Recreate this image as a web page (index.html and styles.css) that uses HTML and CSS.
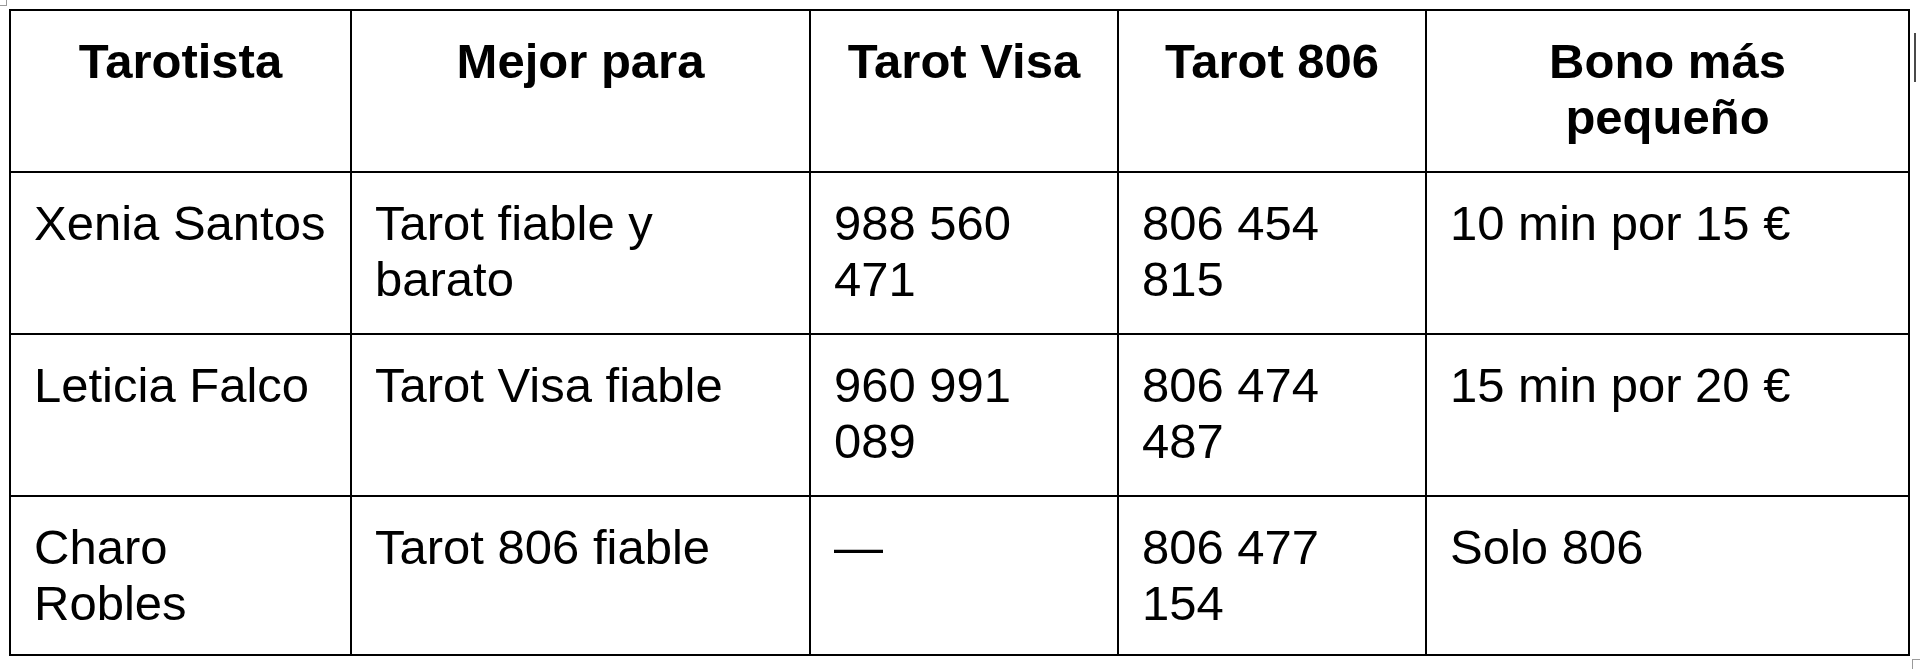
FILE: index.html
```html
<!DOCTYPE html>
<html lang="es">
<head>
<meta charset="utf-8">
<title>Tarotistas</title>
<link rel="stylesheet" href="styles.css">
</head>
<body>
<div class="page">
  <span class="handle handle-move"></span>
  <span class="handle handle-bar"></span>
  <span class="handle handle-resize"></span>
  <table class="tarot-table">
    <colgroup>
      <col class="c1"><col class="c2"><col class="c3"><col class="c4"><col class="c5">
    </colgroup>
    <thead>
      <tr class="row-head">
        <th>Tarotista</th>
        <th>Mejor para</th>
        <th>Tarot Visa</th>
        <th>Tarot 806</th>
        <th>Bono más pequeño</th>
      </tr>
    </thead>
    <tbody>
      <tr class="row">
        <td>Xenia Santos</td>
        <td>Tarot fiable y barato</td>
        <td>988 560 471</td>
        <td>806 454 815</td>
        <td>10 min por 15 €</td>
      </tr>
      <tr class="row">
        <td>Leticia Falco</td>
        <td>Tarot Visa fiable</td>
        <td>960 991 089</td>
        <td>806 474 487</td>
        <td>15 min por 20 €</td>
      </tr>
      <tr class="row row-last">
        <td>Charo Robles</td>
        <td>Tarot 806 fiable</td>
        <td>—</td>
        <td>806 477 154</td>
        <td>Solo 806</td>
      </tr>
    </tbody>
  </table>
</div>
</body>
</html>
```

FILE: styles.css
```css
html, body {
  margin: 0;
  padding: 0;
  background: #ffffff;
}

.page {
  position: relative;
  width: 1920px;
  height: 669px;
  padding: 9px 0 0 9px;
  box-sizing: border-box;
  overflow: hidden;
}

.tarot-table {
  table-layout: fixed;
  width: 1901px;
  border-collapse: separate;
  border-spacing: 0;
  border-top: 2px solid #000;
  border-left: 2px solid #000;
  font-family: "Liberation Sans", Arial, sans-serif;
  font-size: 49px;
  color: #000;
}

.c1 { width: 341px; }
.c2 { width: 459px; }
.c3 { width: 308px; }
.c4 { width: 308px; }
.c5 { width: 483px; }

.tarot-table th,
.tarot-table td {
  border-right: 2px solid #000;
  border-bottom: 2px solid #000;
  vertical-align: top;
  padding: 22px 20px 0 23px;
  box-sizing: border-box;
  line-height: 56px;
}

.tarot-table th {
  font-weight: bold;
  text-align: center;
  padding: 22px 23px 0 23px;
}

.tarot-table td {
  font-weight: normal;
  text-align: left;
}

.row-head { height: 162px; }
.row { height: 162px; }
.row-last { height: 159px; }

.handle {
  position: absolute;
  display: block;
}

.handle-move {
  left: -4px;
  top: -4px;
  width: 9px;
  height: 8px;
  border: 1px solid #9a9a9a;
}

.handle-bar {
  left: 1914px;
  top: 33px;
  width: 2px;
  height: 49px;
  background: #4a4a4a;
}

.handle-resize {
  left: 1912px;
  top: 659px;
  width: 10px;
  height: 14px;
  border: 1px solid #9a9a9a;
}
```
